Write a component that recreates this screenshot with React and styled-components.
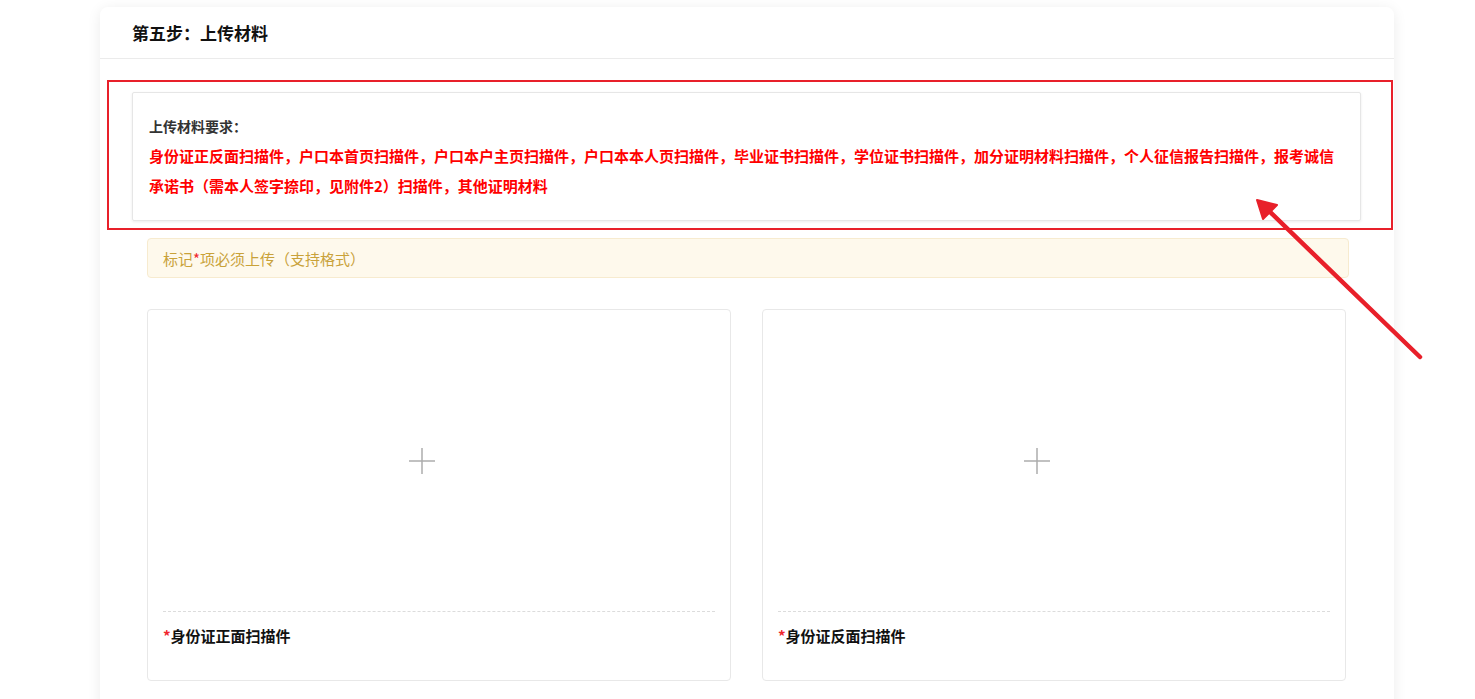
import React from 'react';
import styled, { createGlobalStyle } from 'styled-components';

const GlobalStyle = createGlobalStyle`
  html, body {
    margin: 0;
    padding: 0;
    background: #fff;
    font-family: "Noto Sans CJK SC", "Microsoft YaHei", "Noto Sans", sans-serif;
    color: #333;
  }
`;

const Page = styled.div`
  padding: 7px 81px 0 100px;
  height: 699px;
  overflow: hidden;
  box-sizing: border-box;
`;

const StepCard = styled.section`
  position: relative;
  background: #fff;
  border-radius: 8px 8px 0 0;
  box-shadow: 0 2px 14px rgba(0, 0, 0, 0.08);
  min-height: 760px;
`;

const StepHeader = styled.div`
  height: 51px;
  display: flex;
  align-items: center;
  padding-left: 32px;
  border-bottom: 1px solid #ebebeb;
  font-size: 17px;
  font-weight: 700;
  color: #111;
`;

const StepBody = styled.div`
  padding: 33px 33px 0 32px;
`;

const RequireBox = styled.div`
  border: 1px solid #e6e6e6;
  box-shadow: 0 1px 3px rgba(0, 0, 0, 0.08);
  border-radius: 2px;
  padding: 18px 16px 19px;
`;

const RequireTitle = styled.div`
  font-size: 14px;
  font-weight: 700;
  color: #333;
  line-height: 30px;
`;

const RequireText = styled.div`
  font-size: 15px;
  font-weight: 700;
  color: #ff0000;
  line-height: 30px;
`;

const Inner = styled.div`
  padding: 0 15px 0 15px;
  margin-right: -3px;
`;

const Notice = styled.div`
  margin-top: 17px;
  height: 40px;
  box-sizing: border-box;
  display: flex;
  align-items: center;
  padding-left: 15px;
  background: #fef9ec;
  border: 1px solid #f7ebcf;
  border-radius: 4px;
  font-size: 15px;
  color: #c9a23a;
`;

const Star = styled.span`
  color: #f0262d;
`;

const CardGrid = styled.div`
  margin-top: 31px;
  display: grid;
  grid-template-columns: 584px 584px;
  gap: 31px;
`;

const UploadCard = styled.div`
  border: 1px solid #e8e8e8;
  border-radius: 4px;
  height: 372px;
  box-sizing: border-box;
  display: flex;
  flex-direction: column;
`;

const DropArea = styled.div`
  height: 301px;
  margin: 0 15px;
  padding-right: 34px;
  border-bottom: 1px dashed #dcdcdc;
  display: flex;
  align-items: center;
  justify-content: center;
  cursor: pointer;
`;

const CardLabel = styled.div`
  padding: 14px 15px 0;
  font-size: 15px;
  font-weight: 700;
  color: #111;
  line-height: 20px;
`;

const Highlight = styled.div`
  position: absolute;
  left: 7px;
  top: 73px;
  width: 1286px;
  height: 150px;
  box-sizing: border-box;
  border: 2px solid #e8202a;
  pointer-events: none;
`;

const ArrowLayer = styled.svg`
  position: absolute;
  left: 0;
  top: 0;
  pointer-events: none;
`;

const Plus = () => (
  <svg width="28" height="28" viewBox="0 0 28 28">
    <path d="M14 1v26M1 14h26" stroke="#adadad" strokeWidth="1.5" fill="none" />
  </svg>
);

const uploads = ['身份证正面扫描件', '身份证反面扫描件'];

export default function App() {
  return (
    <>
      <GlobalStyle />
      <Page>
        <StepCard>
          <StepHeader>第五步：上传材料</StepHeader>
          <StepBody>
            <RequireBox>
              <RequireTitle>上传材料要求：</RequireTitle>
              <RequireText>
                身份证正反面扫描件，户口本首页扫描件，户口本户主页扫描件，户口本本人页扫描件，毕业证书扫描件，学位证书扫描件，加分证明材料扫描件，个人征信报告扫描件，报考诚信承诺书（需本人签字捺印，见附件2）扫描件，其他证明材料
              </RequireText>
            </RequireBox>
            <Inner>
              <Notice>
                标记<Star>*</Star>项必须上传（支持格式）
              </Notice>
              <CardGrid>
                {uploads.map(name => (
                  <UploadCard key={name}>
                    <DropArea>
                      <Plus />
                    </DropArea>
                    <CardLabel>
                      <Star>*</Star>{name}
                    </CardLabel>
                  </UploadCard>
                ))}
              </CardGrid>
            </Inner>
          </StepBody>
          <Highlight />
        </StepCard>
      </Page>
      <ArrowLayer width="1475" height="699" viewBox="0 0 1475 699">
        <line x1="1420" y1="357" x2="1268" y2="210" stroke="#e8202a" strokeWidth="4.5" strokeLinecap="round" />
        <polygon points="1257,200 1263,219 1277,205" fill="#e8202a" stroke="#e8202a" strokeWidth="2" strokeLinejoin="round" />
      </ArrowLayer>
    </>
  );
}
